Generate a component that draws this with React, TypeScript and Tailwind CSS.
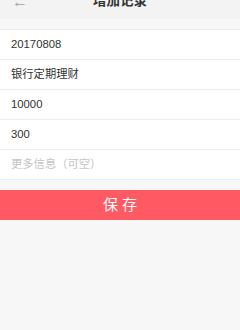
import React from "react";

const rows = [
  { text: "20170808", ph: false },
  { text: "银行定期理财", ph: false },
  { text: "10000", ph: false },
  { text: "300", ph: false },
  { text: "更多信息（可空）", ph: true },
];

export default function App() {
  return (
    <div
      className="w-[240px] h-[330px] bg-[#f7f7f7] overflow-hidden"
      style={{ fontFamily: '"Liberation Sans", "Noto Sans CJK SC", sans-serif' }}
    >
      <div className="relative h-[19px] bg-[#f3f3f3] flex items-end justify-center overflow-hidden">
        <span className="absolute left-[12px] top-[-6px] text-[16px] leading-[16px] text-[#a0a0a0]">←</span>
        <span className="text-[13.5px] leading-[14px] mb-[11px] font-bold text-[#333]">增加记录</span>
      </div>
      <div className="h-[10px]" />
      <div className="bg-white border-t border-[#ececec]">
        {rows.map((r, i) => (
          <div
            key={i}
            className="h-[30px] flex items-center px-[11px] border-b border-[#ececec]"
          >
            <span className={`text-[11.3px] ${r.ph ? "text-[#c4c4c4]" : "text-[#333]"}`}>{r.text}</span>
          </div>
        ))}
      </div>
      <div className="h-[10px]" />
      <div className="h-[30px] bg-[#ff5a64] flex items-center justify-center">
        <span className="text-white text-[15px] tracking-[4px] pl-[4px]">保存</span>
      </div>
    </div>
  );
}
